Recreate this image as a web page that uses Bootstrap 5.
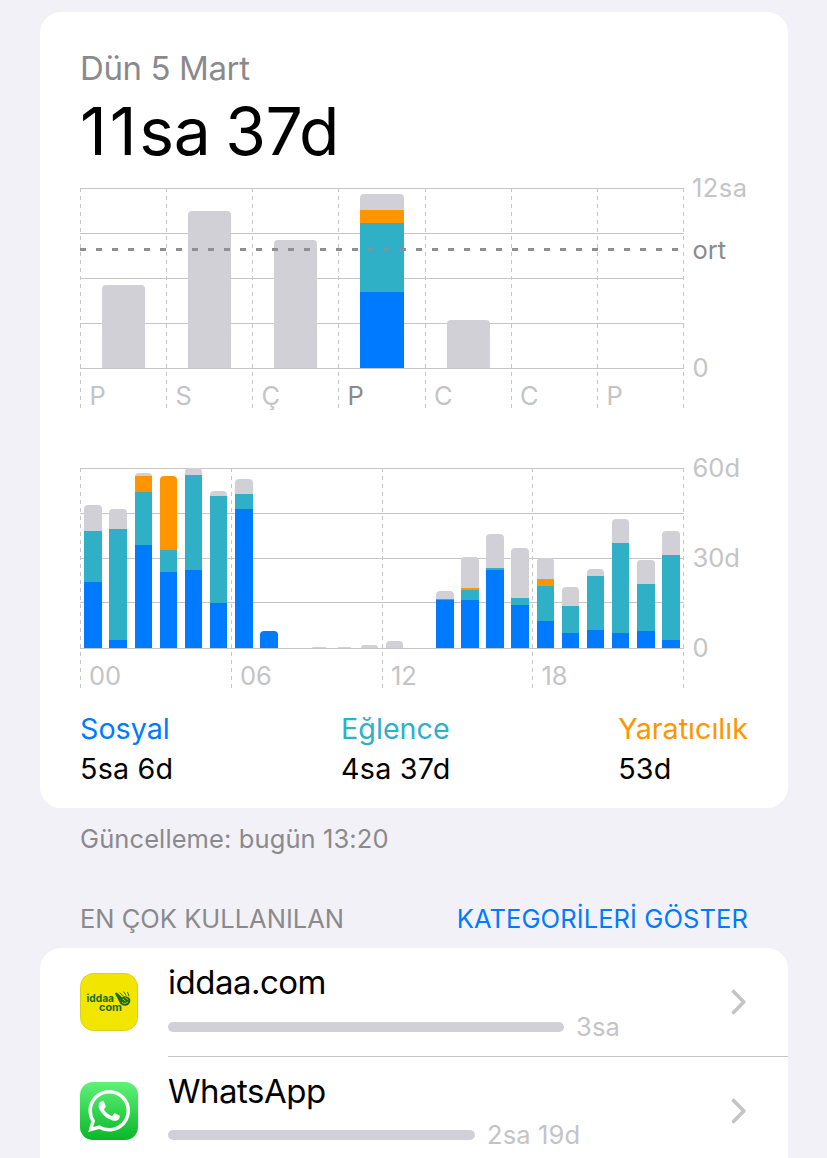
<!DOCTYPE html>
<html lang="tr">
<head>
<meta charset="utf-8">
<meta name="viewport" content="width=device-width, initial-scale=1">
<title>Ekran Süresi</title>
<link href="https://cdn.jsdelivr.net/npm/bootstrap@5.3.0/dist/css/bootstrap.min.css" rel="stylesheet">
<style>
  body { background: #f2f1f7; font-family: Inter, sans-serif; color: #000; height: 100vh; }
  .screen { width: 748px; margin-left: 40px; padding-top: 12px; }
  .panel { border-radius: 21px; }
  .usage { padding: 36px 40px 19px; }
  .day-label { font-size: 33px; line-height: 40px; color: #8a8a8e; letter-spacing: -.4px; }
  .total { font-size: 66px; line-height: 86px; letter-spacing: -.5px; word-spacing: -3px; }
  .total .ones { letter-spacing: 2.8px; }
  .plot { width: 668px; height: 240px; overflow: visible; }
  .plot text { font-size: 25.5px; fill: #c4c4c6; }
  .plot .strong { fill: #8a8a8e; }
  .plot-gap { margin-top: 40px; }
  .legend-row { margin-top: 15px; font-size: 28.7px; line-height: 40px; }
  .legend-row .amount { letter-spacing: .2px; }
  .c-social { color: #007aff; }
  .c-fun { color: #30b0c7; }
  .c-create { color: #ff9500; }
  .note { font-size: 25.5px; line-height: 32px; color: #8a8a8e; padding: 0 40px; }
  .updated { margin-top: 15px; letter-spacing: .1px; }
  .list-head { margin: 48px 0 13px; }
  .list-head .c-social { letter-spacing: .1px; }
  .app-list { padding-bottom: 60px; }
  .app-row { height: 109px; padding-left: 40px; }
  .app-row + .app-row { height: 108px; }
  .app-icon { width: 58px; height: 58px; margin-top: 25px; }
  .app-body { margin-left: 30px; padding-right: 41px; }
  .app-row:first-child .app-body { border-bottom: 1px solid #c6c6c8; }
  .app-text { padding-top: 14px; }
  .app-name { font-size: 33px; line-height: 40px; letter-spacing: -.5px; }
  .usage-line { margin-top: 10px; }
  .app-row + .app-row .usage-line { margin-top: 9px; }
  .meter { height: 10px; border-radius: 5px; background: #d1d0d7; }
  .time { font-size: 25.5px; line-height: 30px; color: #c4c4c6; margin-left: 12px; letter-spacing: .15px; }
</style>
</head>
<body class="overflow-hidden">
<main class="screen">
  <section class="panel usage bg-white">
    <div class="day-label text-nowrap">Dün 5 Mart</div>
    <div class="total text-nowrap"><span class="ones">11</span>sa 37d</div>

    <svg class="plot d-block" id="week" viewBox="80 174 668 240">
      <path d="M80 188.5H684M80 233.5H684M80 278.5H684M80 323.5H684M80 368.5H684" stroke="#c6c6c8"/>
      <path d="M80.5 188V408M166.5 188V408M252.5 188V408M338.5 188V408M425.5 188V408M511.5 188V408M597.5 188V408M683.5 188V408" stroke="#c6c6c8" stroke-dasharray="4 4" fill="none"/>
      <g class="bars"></g>
      <path d="M80 249.5H681" stroke="#8e8e93" stroke-width="3" stroke-dasharray="6 10"/>
      <path d="M360 249.5H404" stroke="#30b0c7" stroke-width="3" opacity=".25"/>
      <text x="89.500" y="405">P</text><text x="175.500" y="405">S</text><text x="261.500" y="405">Ç</text>
      <text x="347.500" y="405" class="strong">P</text><text x="434" y="405">C</text><text x="520" y="405">C</text><text x="606.500" y="405">P</text>
      <text x="692" y="197" textLength="55">12sa</text><text x="692.500" y="259" class="strong">ort</text><text x="692.500" y="377">0</text>
    </svg>

    <svg class="plot plot-gap d-block" id="day" viewBox="80 454 668 240">
      <path d="M80 468.5H684M80 513.5H684M80 558.5H684M80 602.5H684M80 648.5H684" stroke="#c6c6c8"/>
      <path d="M80.5 468V688M231.5 468V688M382.5 468V688M532.5 468V688M683.5 468V688" stroke="#c6c6c8" stroke-dasharray="4 4" fill="none"/>
      <g class="bars"></g>
      <text x="89" y="685">00</text><text x="240" y="685">06</text><text x="391" y="685">12</text><text x="541.500" y="685">18</text>
      <text x="692.500" y="477">60d</text><text x="692.500" y="567">30d</text><text x="692.500" y="657">0</text>
    </svg>

    <div class="legend-row d-flex justify-content-between text-nowrap">
      <div><div class="c-social">Sosyal</div><div class="amount">5sa 6d</div></div>
      <div><div class="c-fun">Eğlence</div><div class="amount">4sa 37d</div></div>
      <div><div class="c-create">Yaratıcılık</div><div class="amount">53d</div></div>
    </div>
  </section>

  <div class="note updated text-nowrap">Güncelleme: bugün 13:20</div>
  <div class="note list-head d-flex justify-content-between text-nowrap">
    <span>EN ÇOK KULLANILAN</span><span class="c-social">KATEGORİLERİ GÖSTER</span>
  </div>

  <section class="panel app-list bg-white">
    <div class="app-row d-flex">
      <svg class="app-icon flex-shrink-0" viewBox="0 0 58 58">
        <rect x=".5" y=".5" width="57" height="57" rx="13" fill="#f2e500" stroke="#d9cf2c"/>
        <g fill="#1d6b22" font-family="Inter, sans-serif" font-weight="700" font-size="10.500">
          <text x="6.500" y="29.300" textLength="27.500" lengthAdjust="spacingAndGlyphs">iddaa</text>
          <text x="19" y="38" textLength="23" lengthAdjust="spacingAndGlyphs">com</text>
        </g>
        <path d="M34.800 20.200l2-.6 5.200 4.600c2-1.800 6.500-1.300 8 1.500 1.200 3-.8 6.600-4.500 7-3 .2-5-1.200-6-3.500z" fill="#1d6b22"/>
        <path d="M40 19.800l3 3M43.800 19l2.200 3.200M47.600 19.400l1.400 3.400" stroke="#1d6b22" stroke-width="1" stroke-linecap="round"/>
        <path d="M42.500 25.800l3.200 2.400M45.400 24.600l2.800 2.200M42 29.300c2 1.600 4.400 1.300 6-.3" stroke="#d8d800" stroke-width=".8" fill="none"/>
      </svg>
      <div class="app-body flex-grow-1 d-flex justify-content-between align-items-center">
        <div class="app-text align-self-start">
          <div class="app-name">iddaa.com</div>
          <div class="usage-line d-flex align-items-center"><div class="meter" style="width:396px"></div><span class="time">3sa</span></div>
        </div>
        <svg width="16" height="26" viewBox="0 0 16 26"><path d="M2.500 2.500L12.800 13L2.500 23.500" fill="none" stroke="#c4c4c6" stroke-width="3.600" stroke-linecap="round" stroke-linejoin="round"/></svg>
      </div>
    </div>
    <div class="app-row d-flex">
      <svg class="app-icon flex-shrink-0" viewBox="0 0 58 58">
        <defs><linearGradient id="green" x2="0" y2="1"><stop stop-color="#5ff27a"/><stop offset="1" stop-color="#09b826"/></linearGradient></defs>
        <rect width="58" height="58" rx="13" fill="url(#green)"/>
        <path transform="translate(8.300 8) scale(2.620)" fill="#fff" d="M13.601 2.326A7.850 7.850 0 0 0 7.994 0C3.627 0 .068 3.558.064 7.926c0 1.399.366 2.760 1.057 3.965L0 16l4.204-1.102a7.900 7.900 0 0 0 3.790.965h.004c4.368 0 7.926-3.558 7.930-7.930A7.900 7.900 0 0 0 13.600 2.326zM7.994 14.521a6.600 6.600 0 0 1-3.356-.920l-.240-.144-2.494.654.666-2.433-.156-.251a6.560 6.560 0 0 1-1.007-3.505c0-3.626 2.957-6.584 6.591-6.584a6.560 6.560 0 0 1 4.660 1.931 6.560 6.560 0 0 1 1.928 4.660c-.004 3.639-2.961 6.592-6.592 6.592m3.615-4.934c-.197-.099-1.170-.578-1.353-.646-.182-.065-.315-.099-.445.099-.133.197-.513.646-.627.775-.114.133-.232.148-.430.050-.197-.100-.836-.308-1.592-.985-.590-.525-.985-1.175-1.103-1.372-.114-.198-.011-.304.088-.403.087-.088.197-.232.296-.346.100-.114.133-.198.198-.330.065-.134.034-.248-.015-.347-.050-.099-.445-1.076-.612-1.470-.160-.389-.323-.335-.445-.340-.114-.007-.247-.007-.380-.007a.730.730 0 0 0-.529.247c-.182.198-.691.677-.691 1.654s.710 1.916.810 2.049c.098.133 1.394 2.132 3.383 2.992.470.205.840.326 1.129.418.475.152.904.129 1.246.080.380-.058 1.171-.480 1.338-.943.164-.464.164-.860.114-.943-.049-.084-.182-.133-.380-.232"/>
      </svg>
      <div class="app-body flex-grow-1 d-flex justify-content-between align-items-center">
        <div class="app-text align-self-start">
          <div class="app-name">WhatsApp</div>
          <div class="usage-line d-flex align-items-center"><div class="meter" style="width:307px"></div><span class="time">2sa 19d</span></div>
        </div>
        <svg width="16" height="26" viewBox="0 0 16 26"><path d="M2.500 2.500L12.800 13L2.500 23.500" fill="none" stroke="#c4c4c6" stroke-width="3.600" stroke-linecap="round" stroke-linejoin="round"/></svg>
      </div>
    </div>
  </section>
</main>
<script>
  // Segments of each bar run from top to bottom: other, creativity, entertainment, social.
  const colours = { g: '#d1d0d7', o: '#ff9500', t: '#30b0c7', b: '#007aff' };
  function drawBars(id, base, radius, bars) {
    let svg = '';
    for (const [x1, x2, segments] of bars) {
      segments.forEach(([key, top], i) => {
        const bottom = i + 1 < segments.length ? segments[i + 1][1] : base;
        const r = i ? 0 : Math.min(radius, base - top);
        svg += `<path fill="${colours[key]}" d="M${x1} ${bottom}V${top + r}q0 ${-r} ${r} ${-r}H${x2 - r}q${r} 0 ${r} ${r}V${bottom}z"/>`;
      });
    }
    document.querySelector(`#${id} .bars`).innerHTML = svg;
  }
  drawBars('week', 368, 4, [
    [102, 145, [['g', 285]]],
    [188, 231, [['g', 211]]],
    [274, 317, [['g', 240]]],
    [360, 404, [['g', 194], ['o', 210], ['t', 223], ['b', 292]]],
    [447, 490, [['g', 320]]]
  ]);
  drawBars('day', 648, 4, [
    [84, 102, [['g', 505], ['t', 531], ['b', 582]]],
    [109, 127, [['g', 509], ['t', 529], ['b', 640]]],
    [135, 152, [['g', 473], ['o', 476], ['t', 492], ['b', 545]]],
    [160, 177, [['o', 476], ['t', 550], ['b', 572]]],
    [185, 202, [['g', 468], ['t', 475], ['b', 570]]],
    [210, 227, [['g', 491], ['t', 496], ['b', 603]]],
    [235, 253, [['g', 479], ['t', 494], ['b', 509]]],
    [260, 278, [['b', 631]]],
    [312, 326, [['g', 647]]],
    [338, 351, [['g', 647]]],
    [361, 378, [['g', 645]]],
    [386, 403, [['g', 641]]],
    [436, 454, [['g', 591], ['t', 599], ['b', 600]]],
    [461, 479, [['g', 557], ['o', 588], ['t', 590], ['b', 600]]],
    [486, 504, [['g', 534], ['t', 568], ['b', 570]]],
    [511, 529, [['g', 548], ['t', 598], ['b', 605]]],
    [537, 554, [['g', 558], ['o', 579], ['t', 586], ['b', 621]]],
    [562, 579, [['g', 587], ['t', 606], ['b', 633]]],
    [587, 604, [['g', 569], ['t', 576], ['b', 630]]],
    [612, 629, [['g', 519], ['t', 543], ['b', 633]]],
    [637, 655, [['g', 560], ['t', 584], ['b', 631]]],
    [662, 680, [['g', 531], ['t', 555], ['b', 640]]]
  ]);
</script>
<script src="https://cdn.jsdelivr.net/npm/bootstrap@5.3.0/dist/js/bootstrap.bundle.min.js"></script>
</body>
</html>
